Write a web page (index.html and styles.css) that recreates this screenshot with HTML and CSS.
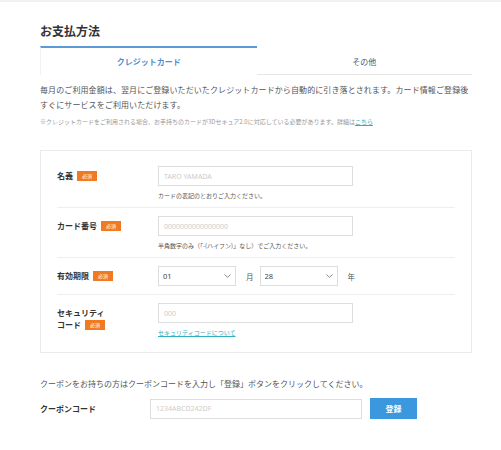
FILE: index.html
```html
<!DOCTYPE html>
<html lang="ja">
<head>
    <meta charset="UTF-8">
    <meta name="viewport" content="width=device-width, initial-scale=1.0">
    <title>お支払方法</title>
    <link rel="stylesheet" href="styles.css">
</head>
<body>
    <div class="top-bar"></div>
    <div class="page">
        <h1 class="title">お支払方法</h1>

        <div class="tabs">
            <div class="tab active">クレジットカード</div>
            <div class="tab">その他</div>
        </div>

        <p class="desc">毎月のご利用金額は、翌月にご登録いただいたクレジットカードから自動的に引き落とされます。カード情報ご登録後すぐにサービスをご利用いただけます。</p>
        <p class="note">※クレジットカードをご利用される場合、お手持ちのカードが3Dセキュア2.0に対応している必要があります。詳細は<a href="#">こちら</a></p>

        <div class="card-form">
            <div class="row">
                <div class="label">名義<span class="badge">必須</span></div>
                <div class="field">
                    <input type="text" class="text-input" placeholder="TARO YAMADA">
                    <div class="help">カードの表記のとおりご入力ください。</div>
                </div>
            </div>
            <div class="row">
                <div class="label">カード番号<span class="badge">必須</span></div>
                <div class="field">
                    <input type="text" class="text-input" placeholder="0000000000000000">
                    <div class="help">半角数字のみ（「-(ハイフン)」なし）でご入力ください。</div>
                </div>
            </div>
            <div class="row">
                <div class="label">有効期限<span class="badge">必須</span></div>
                <div class="field expiry">
                    <span class="select-wrap">
                        <select class="select"><option>01</option></select>
                        <svg class="chevron" width="7" height="4" viewBox="0 0 7 4"><path d="M0.5 0.5 L3.5 3.3 L6.5 0.5" fill="none" stroke="#888" stroke-width="1"/></svg>
                    </span>
                    <span class="unit">月</span>
                    <span class="select-wrap">
                        <select class="select"><option>28</option></select>
                        <svg class="chevron" width="7" height="4" viewBox="0 0 7 4"><path d="M0.5 0.5 L3.5 3.3 L6.5 0.5" fill="none" stroke="#888" stroke-width="1"/></svg>
                    </span>
                    <span class="unit">年</span>
                </div>
            </div>
            <div class="row last">
                <div class="label">セキュリティ<br>コード<span class="badge">必須</span></div>
                <div class="field">
                    <input type="text" class="text-input" placeholder="000">
                    <div class="help"><a href="#">セキュリティコードについて</a></div>
                </div>
            </div>
        </div>

        <p class="coupon-text">クーポンをお持ちの方はクーポンコードを入力し「登録」ボタンをクリックしてください。</p>
        <div class="coupon-row">
            <div class="coupon-label">クーポンコード</div>
            <input type="text" class="coupon-input" placeholder="1234ABCD242DF">
            <button class="coupon-btn">登録</button>
        </div>
    </div>
</body>
</html>
```

FILE: styles.css
```css
body {
    margin: 0;
    padding: 0;
    background-color: #fff;
    color: #333;
    font-family: "Noto Sans CJK JP", "Noto Sans", sans-serif;
}
.top-bar {
    height: 2px;
    background-color: #f1f1f1;
}
.page {
    width: 432px;
    padding: 0 29px 0 40px;
}
.title {
    margin: 21px 0 7px;
    font-size: 12px;
    line-height: 16px;
    font-weight: bold;
    color: #333;
}
.tabs {
    display: flex;
}
.tab {
    flex: 1;
    height: 29px;
    line-height: 27px;
    text-align: center;
    font-size: 8px;
    color: #555;
    border-top: 2px solid transparent;
    border-bottom: 1px solid #e6e6e6;
    box-sizing: border-box;
}
.tab.active {
    color: #4f8fcf;
    font-weight: bold;
    border-top: 2px solid #5a9ad6;
    border-left: 1px solid #f2f2f2;
    border-bottom: none;
}
.desc {
    margin: 7px 0 0;
    font-size: 8px;
    line-height: 15px;
    letter-spacing: 0.1px;
    color: #555;
}
.note {
    margin: 5px 0 0;
    font-size: 6px;
    line-height: 10px;
    color: #999;
}
.note a, .help a {
    color: #31aebd;
    text-decoration: underline;
}
.card-form {
    margin-top: 23px;
    border: 1px solid #ebebeb;
    padding: 7px 16px 8px;
}
.row {
    display: flex;
    align-items: flex-start;
    padding: 8px 0 6px;
    border-bottom: 1px solid #eeeeee;
}
.row.last {
    border-bottom: none;
}
.row:nth-child(3) {
    padding: 8px 0 8px;
}
.label {
    width: 101px;
    margin-top: 4px;
    font-size: 8px;
    line-height: 12px;
    font-weight: bold;
    color: #333;
}
.badge {
    display: inline-block;
    width: 20px;
    height: 10px;
    margin-left: 4px;
    background-color: #f07a22;
    color: #fff;
    font-size: 5px;
    line-height: 10px;
    text-align: center;
    font-weight: normal;
    vertical-align: 1px;
}
.field {
    flex: 1;
}
.text-input, .coupon-input {
    display: block;
    width: 195px;
    height: 20px;
    box-sizing: border-box;
    border: 1px solid #dddddd;
    padding: 0 5px;
    font-family: "Noto Sans", sans-serif;
    font-size: 7px;
    color: #444;
    outline: none;
}
.text-input::placeholder, .coupon-input::placeholder {
    color: #cccccc;
}
.help {
    margin-top: 5px;
    font-size: 6px;
    line-height: 10px;
    color: #555;
}
.expiry {
    display: flex;
    align-items: center;
}
.select-wrap {
    position: relative;
    display: inline-block;
}
.select {
    display: block;
    width: 78px;
    height: 20px;
    box-sizing: border-box;
    border: 1px solid #dddddd;
    background-color: #fff;
    padding: 0 4px;
    font-family: "Noto Sans", sans-serif;
    font-size: 7.5px;
    color: #444;
    appearance: none;
    -webkit-appearance: none;
    border-radius: 0;
    outline: none;
}
.chevron {
    position: absolute;
    right: 5px;
    top: 8px;
}
.unit {
    margin: 0 6px 0 10px;
    font-size: 7.5px;
    color: #555;
}
.coupon-text {
    margin: 25px 0 0;
    font-size: 8px;
    line-height: 12px;
    color: #555;
}
.coupon-row {
    display: flex;
    align-items: center;
    margin-top: 8px;
}
.coupon-label {
    width: 110px;
    font-size: 8px;
    font-weight: bold;
    color: #333;
}
.coupon-input {
    width: 212px;
}
.coupon-btn {
    margin-left: 8px;
    width: 47px;
    height: 21px;
    border: none;
    background-color: #3b98de;
    color: #fff;
    font-family: "Noto Sans CJK JP", sans-serif;
    font-size: 8px;
    font-weight: bold;
    cursor: pointer;
}
```
